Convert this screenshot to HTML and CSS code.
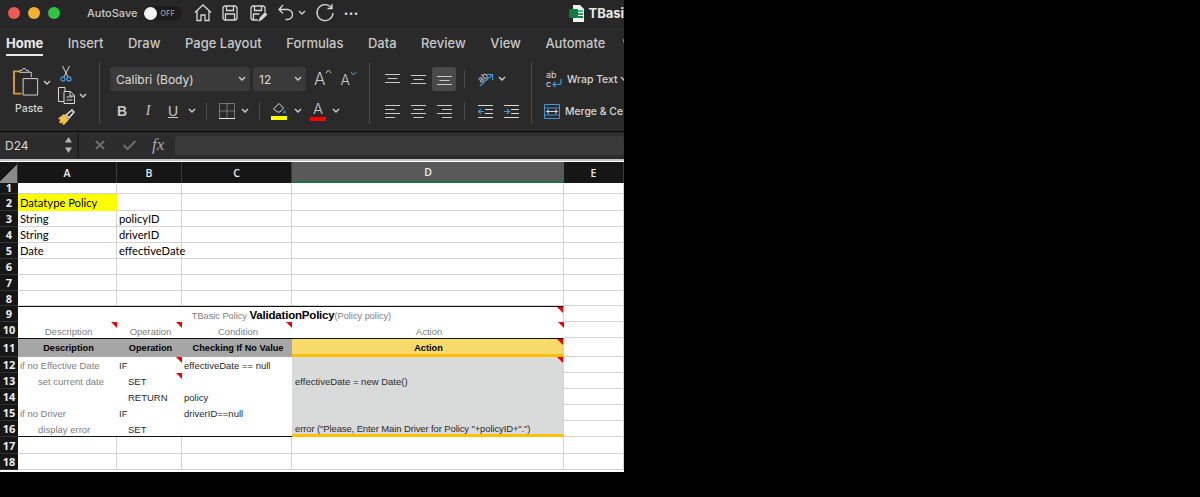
FILE: index.html
```html
<!DOCTYPE html>
<html lang="en">
<head>
    <meta charset="UTF-8">
    <title>TBasic - Excel</title>
    <link rel="stylesheet" href="styles.css">
</head>
<body>
<div class="app">
    <!-- title bar -->
    <div class="titlebar">
        <span class="light red"></span><span class="light amber"></span><span class="light green"></span>
        <span class="autosave">AutoSave</span>
        <span class="toggle"><i></i><b>OFF</b></span>
        <svg class="qa home" width="20" height="20" viewBox="0 0 20 20"><path d="M2 9.500 10 2l8 7.500M4 8v9.500h4v-5.500h4v5.500h4V8"/></svg>
        <svg class="qa save" width="18" height="18" viewBox="0 0 18 18"><path d="M2 3.500 3.500 2h11L16 3.500v11L14.500 16h-11L2 14.500zM5.500 2v4.500h7V2M4.500 16v-6h9v6"/></svg>
        <svg class="qa saveas" width="18" height="18" viewBox="0 0 18 18"><path d="M9 16H3.500L2 14.500v-11L3.500 2h11L16 3.500V8M5.500 2v4.500h7V2M4.500 16v-6h6"/><path class="fat" d="m10.500 16.500 1-3 4.500-4.500 1.500 1.500-4.500 4.500z"/></svg>
        <svg class="qa undo" width="18" height="20" viewBox="0 0 18 20"><path d="M6 2 2 6.500l4 4M2 6.500h8.500a5 5 0 0 1 0 10H8.500"/></svg>
        <svg class="qa chev small-gap" width="8" height="6" viewBox="0 0 8 6"><path d="m1 1 3 3 3-3"/></svg>
        <svg class="qa redo" width="20" height="20" viewBox="0 0 20 20"><path d="M16.500 5A8 8 0 1 0 18 10M17 1v4.500h-4.500"/></svg>
        <span class="more">&middot;&middot;&middot;</span>
        <svg class="docicon" width="15" height="17" viewBox="0 0 15 17"><path fill="#f2f2f2" d="M4 0h7l4 4v13H4z"/><path fill="#33c481" d="M9 5h5v2H9z"/><path fill="#21a366" d="M9 8h5v2H9z"/><path fill="#107c41" d="M9 11h5v2H9z"/><rect y="4" width="9" height="9" rx="1" fill="#107c41"/></svg>
        <span class="docname">TBasi</span>
    </div>

    <!-- tabs -->
    <div class="tabs">
        <span class="tab active">Home</span>
        <span class="tab">Insert</span>
        <span class="tab">Draw</span>
        <span class="tab">Page Layout</span>
        <span class="tab">Formulas</span>
        <span class="tab">Data</span>
        <span class="tab">Review</span>
        <span class="tab">View</span>
        <span class="tab">Automate</span>
        <svg class="bulb" width="10" height="14" viewBox="0 0 10 14"><path fill="none" stroke="#c8c8c8" stroke-width="1.200" d="M3 10C1 8 1 6.500 1 5.500a4 4 0 0 1 8 0c0 1-.5 2.500-2 4.500zM3.500 12.500h3"/></svg>
    </div>

    <!-- ribbon -->
    <div class="ribbon">
        <div class="group clip">
            <div class="paste">
                <svg width="29" height="30" viewBox="0 0 30 30"><path fill="none" stroke="#e0962c" stroke-width="2" d="M8 4H2v23h8"/><path fill="none" stroke="#cfcfcf" d="M8 5V3h2.500l1-2h2l1 2H17v2zM17 5h3v5"/><path fill="#2a2a2a" stroke="#d8d8d8" d="M11.500 11.500h15v17h-15z"/></svg>
                <span>Paste</span>
            </div>
            <svg class="chev paste-chev" width="8" height="6" viewBox="0 0 8 6"><path d="m1 1 3 3 3-3"/></svg>
            <div class="clip-tools">
                <svg width="12" height="16" viewBox="0 0 12 16"><path fill="none" stroke="#d8d8d8" d="m2.500 0 5.500 11M9.500 0 4 11"/><circle cx="3" cy="13" r="2" fill="none" stroke="#3f97e0" stroke-width="1.300"/><circle cx="9" cy="13" r="2" fill="none" stroke="#3f97e0" stroke-width="1.300"/></svg>
                <div class="copy-row">
                    <svg width="18" height="17" viewBox="0 0 18 17"><path fill="none" stroke="#d8d8d8" d="M6 14.500H.5V.5H7V4M6 4.500h6.500l4 4v8H6zM12 5v4h5M8.500 10h6M8.500 13h6"/></svg>
                    <svg class="chev" width="8" height="6" viewBox="0 0 8 6"><path d="m1 1 3 3 3-3"/></svg>
                </div>
                <svg class="brush" width="17" height="16" viewBox="0 0 17 16"><path fill="#f0c04a" d="M0 9.500 6 5l5 5.500L6 16l-2-1 1-2-2.500 1.500L1 13l1.500-2z"/><path fill="none" stroke="#e8e8e8" stroke-width="1.500" d="m8 6 6-5 2 2-5 6z"/></svg>
            </div>
        </div>
        <div class="divider tall"></div>

        <div class="group font">
            <div class="rib-row">
                <div class="select family"><span>Calibri (Body)</span><svg class="chev" width="8" height="6" viewBox="0 0 8 6"><path d="m1 1 3 3 3-3"/></svg></div>
                <div class="select size"><span>12</span><svg class="chev" width="8" height="6" viewBox="0 0 8 6"><path d="m1 1 3 3 3-3"/></svg></div>
                <span class="grow big">A<svg width="7" height="5" viewBox="0 0 7 5"><path fill="none" stroke="#c8c8c8" d="m1 4 2.500-3L6 4"/></svg></span>
                <span class="grow small">A<svg width="7" height="5" viewBox="0 0 7 5"><path fill="none" stroke="#4a9ede" d="m1 1 2.500 3L6 1"/></svg></span>
            </div>
            <div class="rib-row second">
                <span class="fmt bold">B</span>
                <span class="fmt italic">I</span>
                <span class="fmt under">U</span>
                <svg class="chev" width="8" height="6" viewBox="0 0 8 6"><path d="m1 1 3 3 3-3"/></svg>
                <div class="divider short first-div"></div>
                <svg class="borders" width="16" height="16" viewBox="0 0 16 16"><path fill="none" stroke="#bdbdbd" stroke-dasharray="1 1" d="M.5.500h15v15H.5zM8 .5v15M.5 8h15"/><path stroke="#e8e8e8" d="M0 15.500h16"/></svg>
                <svg class="chev border-chev" width="8" height="6" viewBox="0 0 8 6"><path d="m1 1 3 3 3-3"/></svg>
                <div class="divider short"></div>
                <div class="colorbtn fill">
                    <svg width="15" height="12" viewBox="0 0 15 12"><path fill="none" stroke="#d8d8d8" d="M1.500 7 7 1.500l4.500 4.500-3.500 4H5.500z"/><path fill="#3f97e0" d="M12.500 7.500 14 11h-3z"/></svg>
                    <i class="swatch yellow"></i>
                </div>
                <svg class="chev fill-chev" width="8" height="6" viewBox="0 0 8 6"><path d="m1 1 3 3 3-3"/></svg>
                <div class="colorbtn fontcolor"><span>A</span><i class="swatch redbar"></i></div>
                <svg class="chev" width="8" height="6" viewBox="0 0 8 6"><path d="m1 1 3 3 3-3"/></svg>
            </div>
        </div>
        <div class="divider tall"></div>

        <div class="group align">
            <div class="rib-row">
                <span class="alignbtn"><svg width="15" height="11" viewBox="0 0 15 11"><path d="M0 .5h15M2.500 4.500h10M0 8.500h15"/></svg></span>
                <span class="alignbtn"><svg width="15" height="11" viewBox="0 0 15 11"><path d="M0 1.500h15M2.500 5.500h10M0 9.500h15"/></svg></span>
                <span class="alignbtn on"><svg width="15" height="11" viewBox="0 0 15 11"><path d="M0 2.500h15M2.500 6.500h10M0 10.500h15"/></svg></span>
                <div class="divider short"></div>
                <svg class="orient" width="18" height="16" viewBox="0 0 18 16"><path fill="none" stroke="#3f97e0" stroke-width="1.200" d="m4 15 12-11M11 3.500h5.500V9"/><text x="2" y="11" font-size="9" fill="#d8d8d8" font-family="Inter, sans-serif" transform="rotate(-40 5 8)">ab</text></svg>
                <svg class="chev" width="8" height="6" viewBox="0 0 8 6"><path d="m1 1 3 3 3-3"/></svg>
            </div>
            <div class="rib-row second">
                <span class="alignbtn"><svg width="15" height="13" viewBox="0 0 15 13"><path d="M0 .5h15M0 4.500h10M0 8.500h15M0 12.500h10"/></svg></span>
                <span class="alignbtn"><svg width="15" height="13" viewBox="0 0 15 13"><path d="M0 .5h15M2.500 4.500h10M0 8.500h15M2.500 12.500h10"/></svg></span>
                <span class="alignbtn"><svg width="15" height="13" viewBox="0 0 15 13"><path d="M0 .5h15M5 4.500h10M0 8.500h15M5 12.500h10"/></svg></span>
                <div class="divider short"></div>
                <svg class="indent first" width="15" height="13" viewBox="0 0 15 13"><path stroke="#d8d8d8" d="M0 .5h15M7 4.500h8M7 8.500h8M0 12.500h15"/><path fill="none" stroke="#3f97e0" stroke-width="1.200" d="M6 6.500H.5M3 4 .5 6.500 3 9"/></svg>
                <svg class="indent" width="15" height="13" viewBox="0 0 15 13"><path stroke="#d8d8d8" d="M0 .5h15M7 4.500h8M7 8.500h8M0 12.500h15"/><path fill="none" stroke="#3f97e0" stroke-width="1.200" d="M0 6.500h5.500M3 4l2.500 2.500L3 9"/></svg>
            </div>
        </div>
        <div class="divider tall"></div>

        <div class="group wrap">
            <div class="rib-row">
                <svg width="16" height="18" viewBox="0 0 16 18"><text x="0" y="8" font-size="9" fill="#d8d8d8" font-family="Inter, sans-serif">ab</text><text x="0" y="17" font-size="9" fill="#d8d8d8" font-family="Inter, sans-serif">c</text><path fill="none" stroke="#3f97e0" stroke-width="1.200" d="M15 9v3.500a2 2 0 0 1-2 2H7M9.500 12 7 14.500 9.500 17"/></svg>
                <span class="wraptext">Wrap Text</span>
                <svg class="chev" width="8" height="6" viewBox="0 0 8 6"><path d="m1 1 3 3 3-3"/></svg>
            </div>
            <div class="rib-row second">
                <svg class="merge" width="16" height="15" viewBox="0 0 16 15"><path fill="none" stroke="#3f97e0" d="M.5.500h15v14H.5zM.5 4h15M.5 11h15"/><path fill="none" stroke="#d8d8d8" d="M2.500 7.500h11M5 5.500l-2.500 2 2.500 2M11 5.500l2.500 2-2.500 2"/></svg>
                <span class="wraptext">Merge &amp; Ce</span>
            </div>
        </div>
    </div>

    <!-- formula bar -->
    <div class="formulabar">
        <div class="namebox">
            <span>D24</span>
            <svg width="9" height="18" viewBox="0 0 9 18"><path fill="#b5b5b5" d="M4.500 1 8 6.500H1zM4.500 17 1 11.500h7z"/></svg>
        </div>
        <div class="fxgroup">
            <svg width="12" height="12" viewBox="0 0 12 12"><path stroke="#6e6e6e" stroke-width="2" d="m2 2 8 8M10 2l-8 8"/></svg>
            <svg width="15" height="12" viewBox="0 0 15 12"><path fill="none" stroke="#6e6e6e" stroke-width="2" d="m1.500 6 4 4 8-8"/></svg>
            <span class="fx">fx</span>
        </div>
        <div class="forminput"></div>
    </div>

    <!-- sheet -->
    <div class="sheet">
        <div class="corner"></div><div class="col">A</div><div class="col">B</div><div class="col">C</div><div class="col sel">D</div><div class="col">E</div>

        <div class="rownum clipnum">1</div><div class="c"></div><div class="c"></div><div class="c"></div><div class="c"></div><div class="c"></div>
        <div class="rownum">2</div><div class="c cal yellowcell">Datatype Policy</div><div class="c"></div><div class="c"></div><div class="c"></div><div class="c"></div>
        <div class="rownum">3</div><div class="c cal">String</div><div class="c cal">policyID</div><div class="c"></div><div class="c"></div><div class="c"></div>
        <div class="rownum">4</div><div class="c cal">String</div><div class="c cal">driverID</div><div class="c"></div><div class="c"></div><div class="c"></div>
        <div class="rownum">5</div><div class="c cal">Date</div><div class="c cal">effectiveDate</div><div class="c"></div><div class="c"></div><div class="c"></div>
        <div class="rownum">6</div><div class="c"></div><div class="c"></div><div class="c"></div><div class="c"></div><div class="c"></div>
        <div class="rownum">7</div><div class="c"></div><div class="c"></div><div class="c"></div><div class="c"></div><div class="c"></div>
        <div class="rownum">8</div><div class="c"></div><div class="c"></div><div class="c"></div><div class="c"></div><div class="c"></div>

        <div class="rownum">9</div>
        <div class="c plain title tick"><span class="muted">TBasic Policy </span><b>ValidationPolicy</b><span class="muted">(Policy policy)</span></div>
        <div class="c"></div>

        <div class="rownum">10</div><div class="c plain muted center tick">Description</div><div class="c plain muted center tick">Operation</div><div class="c plain muted center tick">Condition</div><div class="c plain muted center tick">Action</div><div class="c"></div>
        <div class="rownum">11</div><div class="c hd">Description</div><div class="c hd">Operation</div><div class="c hd">Checking If No Value</div><div class="c hd gold tick">Action</div><div class="c"></div>

        <div class="rownum">12</div><div class="c plain muted">if no Effective Date</div><div class="c plain dark tick">IF</div><div class="c plain dark">effectiveDate == null</div><div class="c action tick"></div><div class="c"></div>
        <div class="rownum">13</div><div class="c plain muted ind">set current date</div><div class="c plain dark ind2 tick">SET</div><div class="c plain"></div><div class="c action dark">effectiveDate = new Date()</div><div class="c"></div>
        <div class="rownum">14</div><div class="c plain"></div><div class="c plain dark ind2">RETURN</div><div class="c plain dark">policy</div><div class="c action"></div><div class="c"></div>
        <div class="rownum">15</div><div class="c plain muted">if no Driver</div><div class="c plain dark">IF</div><div class="c plain dark">driverID==null</div><div class="c action"></div><div class="c"></div>
        <div class="rownum">16</div><div class="c plain muted ind endrow">display error</div><div class="c plain dark ind2 endrow">SET</div><div class="c plain endrow"></div><div class="c action dark lastaction">error ("Please, Enter Main Driver for Policy "+policyID+".")</div><div class="c"></div>

        <div class="rownum">17</div><div class="c"></div><div class="c"></div><div class="c"></div><div class="c"></div><div class="c"></div>
        <div class="rownum">18</div><div class="c"></div><div class="c"></div><div class="c"></div><div class="c"></div><div class="c"></div>
    </div>
</div>
</body>
</html>
```

FILE: styles.css
```css
* {
    box-sizing: border-box;
}

html, body {
    height: 100%;
}

body {
    margin: 0;
    background-color: #000;
    font-family: Inter, "Liberation Sans", sans-serif;
    overflow: hidden;
}

.app {
    width: 624px;
    height: 472px;
    overflow: hidden;
    background-color: #fff;
}

/* title bar */
.titlebar {
    height: 28px;
    background-color: #272727;
    display: flex;
    align-items: center;
    padding: 0 0 2px 8px;
    white-space: nowrap;
    overflow: hidden;
}

.light {
    width: 12px;
    height: 12px;
    border-radius: 50%;
    margin-right: 8px;
    flex: none;
}

.red { background-color: #ee5a52; }
.amber { background-color: #f5b02e; }
.green { background-color: #2fc443; }

.autosave {
    margin-left: 19px;
    font-size: 11px;
    font-weight: 500;
    color: #c9c9c9;
}

.toggle {
    width: 39px;
    height: 15px;
    margin-left: 6px;
    border-radius: 8px;
    background-color: #1d1d1d;
    display: flex;
    align-items: center;
    flex: none;
}

.toggle i {
    width: 13px;
    height: 13px;
    margin-left: 1px;
    border-radius: 50%;
    background-color: #f4f4f4;
}

.toggle b {
    margin-left: 3px;
    font-size: 7px;
    font-weight: 500;
    letter-spacing: 0.3px;
    color: #a5a5a5;
}

.qa {
    flex: none;
    fill: none;
    stroke: #d6d6d6;
    stroke-width: 1.3;
}

.qa.home { margin-left: 11px; }
.qa.save { margin-left: 8px; }
.qa.saveas { margin-left: 10px; }
.qa.undo { margin-left: 10px; }
.qa.small-gap { margin-left: 3px; }
.qa.redo { margin-left: 9px; }
.qa .fat { fill: #d6d6d6; }

.more {
    margin-left: 8px;
    font-size: 15px;
    font-weight: 700;
    color: #d6d6d6;
}

.docicon {
    margin-left: 211px;
    flex: none;
}

.docname {
    margin-left: 4px;
    font-size: 13px;
    font-weight: 700;
    color: #e8e8e8;
}

/* tabs */
.tabs {
    height: 32px;
    background-color: #2a2a2a;
    display: flex;
    align-items: flex-start;
    padding-left: 6px;
    gap: 24.500px;
    white-space: nowrap;
    overflow: hidden;
}

.tab {
    height: 28px;
    padding-top: 7px;
    font-size: 13px;
    font-weight: 500;
    color: #c8c8c8;
}

.tab.active {
    color: #ececec;
    font-weight: 700;
    border-bottom: 2px solid #e8e8e8;
}

.bulb {
    flex: none;
    margin: 7px 0 0 -7px;
}

/* ribbon */
.ribbon {
    height: 72px;
    background-color: #2a2a2a;
    display: flex;
    align-items: flex-start;
    padding-top: 2px;
    border-bottom: 1px solid #0c0c0c;
    overflow: hidden;
}

.group {
    flex: none;
}

.divider {
    width: 1px;
    background-color: #4b4b4b;
    flex: none;
}

.divider.tall {
    height: 62px;
}

.divider.short {
    height: 18px;
}

.chev {
    fill: none;
    stroke: #d0d0d0;
    stroke-width: 1.400;
    flex: none;
}

.clip {
    width: 99px;
    padding: 5px 0 0 12px;
    display: flex;
}

.paste {
    width: 34px;
    display: flex;
    flex-direction: column;
    align-items: center;
}

.paste svg {
    align-self: flex-start;
}

.paste span {
    margin-top: 5px;
    font-size: 10.500px;
    font-weight: 500;
    color: #d8d8d8;
}

.paste-chev {
    margin: 13px 0 0 -3px;
}

.clip-tools {
    margin: -1px 0 0 9px;
    display: flex;
    flex-direction: column;
    align-items: flex-start;
    gap: 5px;
}

.copy-row {
    display: flex;
    align-items: center;
    margin-left: -2px;
    gap: 3px;
}

.brush {
    margin-left: -2px;
}

.rib-row {
    height: 24px;
    display: flex;
    align-items: center;
}

.rib-row.second {
    margin-top: 8px;
}

.font {
    width: 269px;
    padding: 5px 0 0 10px;
}

.select {
    height: 24px;
    border-radius: 3px;
    background-color: #3a3a3a;
    display: flex;
    align-items: center;
    justify-content: space-between;
    padding: 0 4px 0 6px;
    font-size: 12px;
    color: #dcdcdc;
}

.select.family {
    width: 140px;
}

.select.size {
    width: 53px;
    margin-left: 3px;
}

.grow {
    display: flex;
    align-items: flex-start;
    font-weight: 300;
    color: #c8c8c8;
}

.grow.big {
    margin-left: 8px;
    font-size: 17px;
}

.grow.small {
    margin-left: 8px;
    font-size: 14px;
}

.fmt {
    width: 26px;
    text-align: center;
    color: #c8c8c8;
    font-family: "Liberation Sans", sans-serif;
    font-size: 14px;
}

.fmt.bold {
    margin-left: -1px;
    font-weight: 700;
}

.fmt.italic {
    font-style: italic;
    font-family: "Liberation Serif", serif;
}

.fmt.under {
    width: 24px;
    text-decoration: underline;
}

.second > .chev {
    margin-left: 3px;
}

.second > .border-chev {
    margin-left: 6px;
}

.second > .fill-chev {
    margin-left: 4px;
}

.font .second .divider {
    margin: 0 11px 0 10px;
}

.font .second .first-div {
    margin-right: 12px;
}

.borders {
    flex: none;
}

.colorbtn {
    width: 16px;
    display: flex;
    flex-direction: column;
    align-items: center;
    margin-right: 3px;
}

.colorbtn span {
    font-size: 15px;
    line-height: 16px;
    font-weight: 300;
    color: #c8c8c8;
}

.swatch {
    width: 16px;
    height: 4px;
    display: block;
}

.yellow { background-color: #ffff00; margin-top: 2px; }
.redbar { background-color: #ff0000; }

.colorbtn.fontcolor {
    margin-left: 8px;
}

.align {
    width: 161px;
    padding: 5px 0 0 10px;
}

.alignbtn {
    width: 24px;
    height: 24px;
    margin-right: 2px;
    border-radius: 3px;
    display: flex;
    align-items: center;
    justify-content: center;
}

.alignbtn svg {
    stroke: #c8c8c8;
    stroke-width: 1;
}

.alignbtn.on {
    background-color: #4a4a4a;
}

.align .divider {
    margin: 0 6px 0 6px;
}

.orient {
    margin: 0 4px 0 5px;
    overflow: visible;
}

.indent {
    flex: none;
    margin-right: 11px;
}

.indent.first {
    margin-left: 7px;
}

.wrap {
    padding: 5px 0 0 14px;
}

.wrap .rib-row svg:first-child {
    margin-right: 5px;
}

.wrap .rib-row .merge {
    margin: 0 6px 0 -2px;
}

.wraptext {
    font-size: 10.400px;
    font-weight: 500;
    color: #d8d8d8;
    white-space: nowrap;
    margin-right: 2px;
}

/* formula bar */
.formulabar {
    height: 29px;
    background-color: #2c2c2c;
    border-bottom: 2px solid #c4c4c4;
    display: flex;
    align-items: center;
    padding: 0 0 1px 0;
}

.namebox {
    width: 79px;
    height: 26px;
    padding: 0 4px 0 5px;
    display: flex;
    align-items: center;
    justify-content: space-between;
    font-size: 12px;
    color: #d8d8d8;
    border-right: 2px solid #1f1f1f;
    flex: none;
}

.fxgroup {
    width: 94px;
    margin-left: 3px;
    padding-left: 12px;
    display: flex;
    align-items: center;
    gap: 16px;
    flex: none;
}

.fx {
    font-family: "Liberation Serif", serif;
    font-style: italic;
    font-size: 17px;
    color: #a8a8a8;
    margin-left: -1px;
}

.forminput {
    flex: 1;
    height: 19px;
    background-color: #3a3a3a;
    border-radius: 3px;
    margin-left: -1px;
}

/* sheet grid */
.sheet {
    height: 311px;
    margin-top: 1px;
    display: grid;
    grid-template-columns: 18px 99px 65px 110px 272px 60px;
    grid-template-rows: 21px 11px 17px 16px 16px 16px 16px 16px 15px 16px 16px 19px 16px 16px 16px 16px 16px 17px 16px;
    background-color: #fff;
    font-family: "Liberation Sans", sans-serif;
    font-size: 9.500px;
}

.corner {
    background-color: #161616;
    background-image: linear-gradient(135deg, #161616 50%, #8a8a8a 50%);
    border-right: 1px solid #3a3a3a;
}

.col {
    background-color: #161616;
    border-right: 1px solid #3a3a3a;
    color: #eee;
    font-family: "Open Sans", sans-serif;
    font-size: 10.500px;
    font-weight: 600;
    display: flex;
    align-items: center;
    justify-content: center;
}

.col.sel {
    background-color: #595959;
    border-bottom: 2px solid #1e7145;
    border-right: none;
}

.rownum {
    background-color: #161616;
    color: #eee;
    font-family: "Open Sans", sans-serif;
    font-size: 11px;
    font-weight: 700;
    display: flex;
    align-items: center;
    justify-content: center;
    overflow: hidden;
    border-bottom: 1px solid #333;
}

.rownum.clipnum {
    align-items: flex-end;
    line-height: 11px;
}

.c {
    position: relative;
    min-width: 0;
    border-right: 1px solid #d4d4d4;
    border-bottom: 1px solid #d4d4d4;
    padding-left: 2px;
    display: flex;
    align-items: center;
    white-space: nowrap;
    color: #111;
}

.cal {
    font-family: Lato, "Open Sans", sans-serif;
    font-size: 11.200px;
    color: #000;
}

.yellowcell {
    background-color: #ffff00;
    border-color: #ffff00;
}

/* decision table */
.plain {
    border-bottom: none;
    border-right: none;
}

.title {
    grid-column: span 4;
    display: block;
    text-align: center;
    line-height: 17px;
    font-size: 9.200px;
    border-top: 1px solid #111;
    border-right: 1px solid #d4d4d4;
}

.title b {
    font-size: 11.500px;
    color: #000;
    letter-spacing: -0.2px;
}

.muted {
    color: #808080;
}

.dark {
    color: #2a2a2a;
}

.center {
    justify-content: center;
    padding-top: 3px;
}

.ind {
    padding-left: 20px;
}

.ind2 {
    padding-left: 11px;
}

.hd {
    justify-content: center;
    background-color: #a6a6a6;
    border-top: 1px solid #111;
    border-bottom: none;
    border-right: none;
    font-size: 9.200px;
    font-weight: 700;
    color: #000;
}

.gold {
    background-color: #f8da6b;
    border-bottom: 3px solid #ffc000;
    border-right: 1px solid #d4d4d4;
    padding-top: 2px;
}

.action {
    background-color: #d9dada;
    border-bottom: none;
    border-right-color: #d4d4d4;
    padding-left: 3px;
}

.lastaction {
    border-bottom: 3px solid #ffc000;
    letter-spacing: -0.120px;
    padding-top: 1px;
}

.endrow {
    border-bottom: 1px solid #111;
    padding-top: 1px;
}

/* red comment marker */
.tick::after {
    content: "";
    position: absolute;
    top: 0;
    right: 0;
    width: 6px;
    height: 6px;
    background-color: #f00000;
    clip-path: polygon(0 0, 100% 0, 100% 100%);
}
```
